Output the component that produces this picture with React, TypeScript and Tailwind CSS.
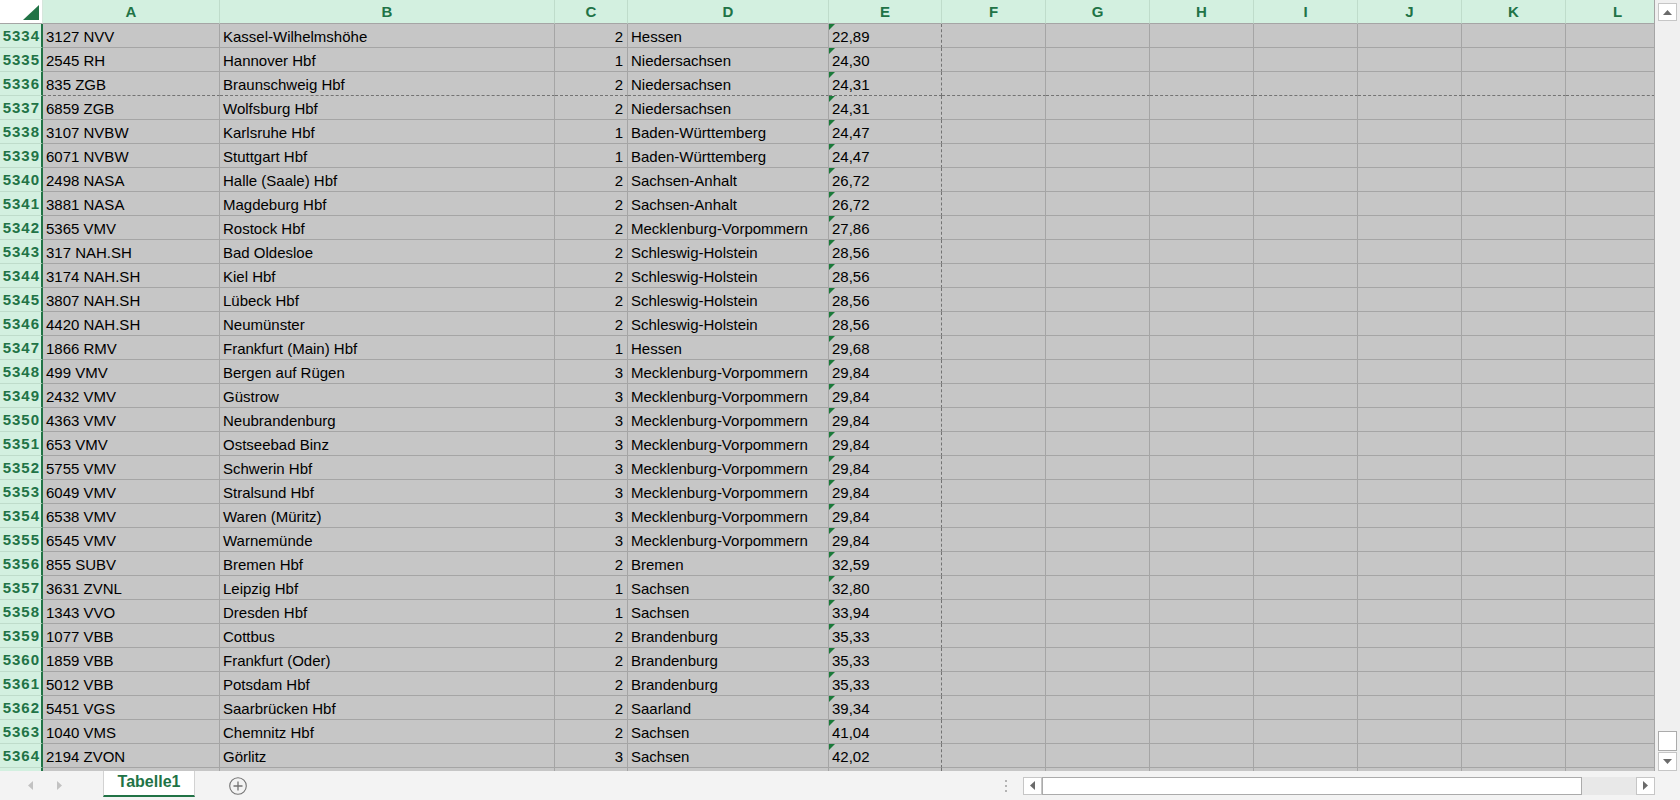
import React from 'react'

type Row = [string, string, string, string, string]

const ROWS: Row[] = [
  ['3127 NVV', 'Kassel-Wilhelmshöhe', '2', 'Hessen', '22,89'],
  ['2545 RH', 'Hannover Hbf', '1', 'Niedersachsen', '24,30'],
  ['835 ZGB', 'Braunschweig Hbf', '2', 'Niedersachsen', '24,31'],
  ['6859 ZGB', 'Wolfsburg Hbf', '2', 'Niedersachsen', '24,31'],
  ['3107 NVBW', 'Karlsruhe Hbf', '1', 'Baden-Württemberg', '24,47'],
  ['6071 NVBW', 'Stuttgart Hbf', '1', 'Baden-Württemberg', '24,47'],
  ['2498 NASA', 'Halle (Saale) Hbf', '2', 'Sachsen-Anhalt', '26,72'],
  ['3881 NASA', 'Magdeburg Hbf', '2', 'Sachsen-Anhalt', '26,72'],
  ['5365 VMV', 'Rostock Hbf', '2', 'Mecklenburg-Vorpommern', '27,86'],
  ['317 NAH.SH', 'Bad Oldesloe', '2', 'Schleswig-Holstein', '28,56'],
  ['3174 NAH.SH', 'Kiel Hbf', '2', 'Schleswig-Holstein', '28,56'],
  ['3807 NAH.SH', 'Lübeck Hbf', '2', 'Schleswig-Holstein', '28,56'],
  ['4420 NAH.SH', 'Neumünster', '2', 'Schleswig-Holstein', '28,56'],
  ['1866 RMV', 'Frankfurt (Main) Hbf', '1', 'Hessen', '29,68'],
  ['499 VMV', 'Bergen auf Rügen', '3', 'Mecklenburg-Vorpommern', '29,84'],
  ['2432 VMV', 'Güstrow', '3', 'Mecklenburg-Vorpommern', '29,84'],
  ['4363 VMV', 'Neubrandenburg', '3', 'Mecklenburg-Vorpommern', '29,84'],
  ['653 VMV', 'Ostseebad Binz', '3', 'Mecklenburg-Vorpommern', '29,84'],
  ['5755 VMV', 'Schwerin Hbf', '3', 'Mecklenburg-Vorpommern', '29,84'],
  ['6049 VMV', 'Stralsund Hbf', '3', 'Mecklenburg-Vorpommern', '29,84'],
  ['6538 VMV', 'Waren (Müritz)', '3', 'Mecklenburg-Vorpommern', '29,84'],
  ['6545 VMV', 'Warnemünde', '3', 'Mecklenburg-Vorpommern', '29,84'],
  ['855 SUBV', 'Bremen Hbf', '2', 'Bremen', '32,59'],
  ['3631 ZVNL', 'Leipzig Hbf', '1', 'Sachsen', '32,80'],
  ['1343 VVO', 'Dresden Hbf', '1', 'Sachsen', '33,94'],
  ['1077 VBB', 'Cottbus', '2', 'Brandenburg', '35,33'],
  ['1859 VBB', 'Frankfurt (Oder)', '2', 'Brandenburg', '35,33'],
  ['5012 VBB', 'Potsdam Hbf', '2', 'Brandenburg', '35,33'],
  ['5451 VGS', 'Saarbrücken Hbf', '2', 'Saarland', '39,34'],
  ['1040 VMS', 'Chemnitz Hbf', '2', 'Sachsen', '41,04'],
  ['2194 ZVON', 'Görlitz', '3', 'Sachsen', '42,02'],
]

const COLS = [
  { id: 'A', w: 'w-[177px]' },
  { id: 'B', w: 'w-[335px]' },
  { id: 'C', w: 'w-[73px]' },
  { id: 'D', w: 'w-[201px]' },
  { id: 'E', w: 'w-[113px]' },
  { id: 'F', w: 'w-[104px]' },
  { id: 'G', w: 'w-[104px]' },
  { id: 'H', w: 'w-[104px]' },
  { id: 'I', w: 'w-[104px]' },
  { id: 'J', w: 'w-[104px]' },
  { id: 'K', w: 'w-[104px]' },
  { id: 'L', w: 'w-[104px]' },
]

const FIRST_ROW = 5334
const PAGE_BREAK_ROW = 5336

export default function App() {
  return (
    <div className="flex h-[800px] w-full flex-col overflow-hidden bg-[#f3f3f3] font-['Liberation_Sans',Arial,sans-serif]">
      <div className="flex h-[771px] shrink-0">
        <div className="w-[1655px] shrink-0 overflow-hidden border-r border-[#a5a5a5] bg-[#c6c6c6]">
          <HeaderRow />
          {ROWS.map((r, i) => (
            <DataRow key={i} n={FIRST_ROW + i} row={r} />
          ))}
          {/* next row, only its top edge shows */}
          <DataRow n={0} row={['', '', '', '', '']} />
        </div>
        <VScroll />
      </div>
      <BottomBar />
    </div>
  )
}

function HeaderRow() {
  return (
    <div className="flex h-[24px]">
      {/* select-all corner */}
      <div className="flex w-[43px] shrink-0 items-end justify-end border-b border-r border-b-[#a5a5a5] border-r-[#d6e6dc] bg-white pb-[3px] pr-[3px]">
        <svg width="16" height="15" viewBox="0 0 16 15">
          <polygon points="16,0 16,15 0,15" fill="#217346" />
        </svg>
      </div>
      {COLS.map(c => (
        <div
          key={c.id}
          className={`${c.w} shrink-0 border-b border-r border-b-[#a5a5a5] border-r-[#bfdccb] bg-[#d3f0e0] text-center text-[15px] font-bold leading-[23px] text-[#217346]`}
        >
          {c.id}
        </div>
      ))}
    </div>
  )
}

function DataRow({ n, row }: { n: number; row: Row }) {
  const pageBreak = n === PAGE_BREAK_ROW
  return (
    <div className="flex h-[24px]">
      <div className="w-[43px] shrink-0 border-b border-r-2 border-b-[#bfdccb] border-r-[#217346] bg-[#d3f0e0] pr-[1px] pt-[1px] text-right text-[15px] font-bold leading-[22px] tracking-[1px] text-[#217346]">
        {n > 0 ? n : ''}
      </div>
      {COLS.map((c, i) => {
        const value = i < 5 ? row[i] : ''
        const isE = c.id === 'E'
        let cls = `relative ${c.w} shrink-0 overflow-hidden whitespace-nowrap border-b border-r border-[#a5a5a5] bg-[#c6c6c6] pt-[2px] text-[15px] leading-[21px] text-black`
        cls += c.id === 'C' ? ' pr-[4px] text-right' : ' pl-[3px]'
        if (pageBreak) cls += ' [border-bottom-style:dashed] border-b-[#737373]'
        if (isE) cls += ' [border-right-style:dashed] border-r-[#737373]'
        return (
          <div key={c.id} className={cls}>
            {isE && value && (
              <span className="absolute left-0 top-0 h-0 w-0 border-r-[6px] border-t-[6px] border-r-transparent border-t-[#1b7a3a]" />
            )}
            {value}
          </div>
        )
      })}
    </div>
  )
}

function VScroll() {
  return (
    <div className="flex w-[25px] shrink-0 flex-col bg-[#f0f0f0] pl-[3px] pt-[3px]">
      <div className="flex h-[18px] w-[19px] items-center justify-center border border-[#c6c6c6] bg-white">
        <svg width="9" height="5" viewBox="0 0 9 5">
          <polygon points="4.5,0 9,5 0,5" fill="#6b6b6b" />
        </svg>
      </div>
      <div className="flex-1" />
      <div className="h-[20px] w-[19px] border border-[#ababab] bg-white" />
      <div className="mt-px flex h-[19px] w-[19px] items-center justify-center border border-[#c6c6c6] bg-white">
        <svg width="9" height="5" viewBox="0 0 9 5">
          <polygon points="0,0 9,0 4.5,5" fill="#6b6b6b" />
        </svg>
      </div>
    </div>
  )
}

function BottomBar() {
  return (
    <div className="flex h-[29px] shrink-0 items-center bg-[#f3f3f3]">
      <div className="flex h-full w-[103px] shrink-0 items-center">
        <svg className="ml-[28px]" width="5" height="9" viewBox="0 0 5 9">
          <polygon points="5,0 5,9 0,4.5" fill="#c2c2c2" />
        </svg>
        <svg className="ml-[24px]" width="5" height="9" viewBox="0 0 5 9">
          <polygon points="0,0 5,4.5 0,9" fill="#c2c2c2" />
        </svg>
      </div>
      <div className="h-[26px] w-[92px] shrink-0 self-start border-x border-b-2 border-x-[#d2d2d2] border-b-[#217346] bg-white text-center text-[16px] font-bold leading-[22px] text-[#217346]">
        Tabelle1
      </div>
      <svg className="ml-[34px] shrink-0" width="18" height="18" viewBox="0 0 18 18">
        <circle cx="9" cy="9" r="8.3" fill="none" stroke="#737373" strokeWidth="1.1" />
        <path d="M9 4.5v9M4.5 9h9" stroke="#737373" strokeWidth="1.3" />
      </svg>
      <div className="flex-1" />
      <div className="flex w-[675px] shrink-0 items-center">
        <div className="flex flex-col gap-[3px]">
          <span className="h-[2px] w-[2px] bg-[#b3b3b3]" />
          <span className="h-[2px] w-[2px] bg-[#b3b3b3]" />
          <span className="h-[2px] w-[2px] bg-[#b3b3b3]" />
        </div>
        <div className="ml-[16px] flex h-[18px] w-[19px] items-center justify-center border border-[#c6c6c6] bg-white">
          <svg width="5" height="9" viewBox="0 0 5 9">
            <polygon points="5,0 5,9 0,4.5" fill="#6b6b6b" />
          </svg>
        </div>
        <div className="h-[18px] w-[540px] border border-[#ababab] bg-white" />
        <div className="h-[18px] w-[54px] bg-[#e8e8e8]" />
        <div className="flex h-[18px] w-[19px] items-center justify-center border border-[#c6c6c6] bg-white">
          <svg width="5" height="9" viewBox="0 0 5 9">
            <polygon points="0,0 5,4.5 0,9" fill="#6b6b6b" />
          </svg>
        </div>
      </div>
    </div>
  )
}
